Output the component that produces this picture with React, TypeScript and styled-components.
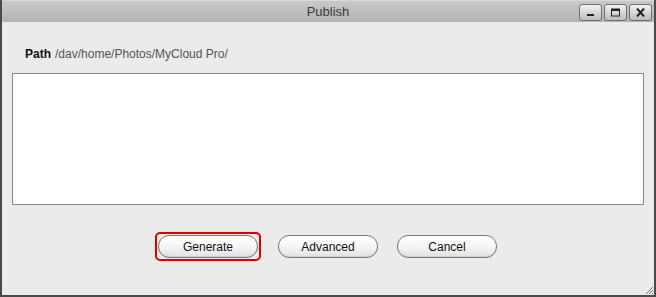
import React from 'react';
import styled, { createGlobalStyle } from 'styled-components';

const GlobalStyle = createGlobalStyle`
  html, body {
    margin: 0;
    padding: 0;
    background: #ebebeb;
  }
  body {
    font-family: 'Liberation Sans', Arial, sans-serif;
  }
`;

const Window = styled.div`
  width: 656px;
  height: 297px;
  box-sizing: border-box;
  display: flex;
  flex-direction: column;
  background: #ebebeb;
  border-left: 2px solid #4a4a4a;
  border-right: 2px solid #4a4a4a;
  border-bottom: 2px solid #4a4a4a;
  position: relative;
`;

const TitleBar = styled.div`
  height: 22px;
  flex-shrink: 0;
  display: flex;
  align-items: center;
  justify-content: center;
  position: relative;
  background: linear-gradient(#c9c9c9, #b3b3b3);
  border-top: 1px solid #d8d8d8;
  box-sizing: border-box;
`;

const Title = styled.span`
  font-size: 13px;
  color: #3c3c3c;
`;

const WindowControls = styled.div`
  position: absolute;
  right: 2px;
  top: 3px;
  display: flex;
  gap: 2px;
`;

const ControlButton = styled.div`
  width: 23px;
  height: 17px;
  box-sizing: border-box;
  border: 1px solid #6f6f6f;
  border-radius: 3px;
  background: linear-gradient(#f2f2f2, #bdbdbd);
  display: flex;
  align-items: center;
  justify-content: center;
`;

const Body = styled.div`
  flex: 1;
  display: flex;
  flex-direction: column;
  padding: 0 10px;
`;

const PathRow = styled.div`
  margin-top: 25px;
  padding-left: 13px;
  font-size: 12px;
  height: 15px;
  line-height: 15px;
`;

const PathLabel = styled.span`
  font-weight: bold;
  color: #111;
  margin-right: 4px;
`;

const PathValue = styled.span`
  color: #555;
`;

const TextArea = styled.div`
  margin-top: 11px;
  height: 132px;
  background: #fff;
  border: 1px solid #8a8a8a;
  box-sizing: border-box;
`;

const ButtonRow = styled.div`
  margin-top: 30px;
  display: flex;
  justify-content: center;
  gap: 19px;
  padding-right: 2px;
`;

const Focus = styled.div`
  border: 2px solid #dd0000;
  border-radius: 5px;
  padding: 1px;
  margin: -3px -2px;
  display: flex;
`;

const Button = styled.button`
  width: 100px;
  height: 23px;
  box-sizing: border-box;
  border: 1px solid #7a7a7a;
  border-radius: 11px;
  background: linear-gradient(#ffffff 0%, #f6f6f6 50%, #e2e2e2 100%);
  box-shadow: inset 0 -1px 1px #cfcfcf;
  font-family: 'Liberation Sans', Arial, sans-serif;
  font-size: 12px;
  color: #111;
  padding: 0;
`;

const Grip = styled.svg`
  position: absolute;
  right: 0;
  bottom: 0;
`;

export default function App() {
  return (
    <>
      <GlobalStyle />
      <Window>
        <TitleBar>
          <Title>Publish</Title>
          <WindowControls>
            <ControlButton>
              <svg width="11" height="9" viewBox="0 0 11 9">
                <rect x="2" y="6" width="7" height="2" fill="#222" />
              </svg>
            </ControlButton>
            <ControlButton>
              <svg width="11" height="9" viewBox="0 0 11 9">
                <rect x="1.5" y="1" width="8" height="7" fill="none" stroke="#222" strokeWidth="1" />
                <rect x="1.5" y="1" width="8" height="2" fill="#222" />
              </svg>
            </ControlButton>
            <ControlButton>
              <svg width="11" height="9" viewBox="0 0 11 9">
                <path d="M2 0.5 L9 8.5 M9 0.5 L2 8.5" stroke="#222" strokeWidth="2" />
              </svg>
            </ControlButton>
          </WindowControls>
        </TitleBar>
        <Body>
          <PathRow>
            <PathLabel>Path</PathLabel>
            <PathValue>/dav/home/Photos/MyCloud Pro/</PathValue>
          </PathRow>
          <TextArea />
          <ButtonRow>
            <Focus>
              <Button>Generate</Button>
            </Focus>
            <Button>Advanced</Button>
            <Button>Cancel</Button>
          </ButtonRow>
        </Body>
        <Grip width="10" height="10" viewBox="0 0 10 10">
          <path d="M9 2 L2 9 M9 5 L5 9 M9 8 L8 9" stroke="#777" strokeWidth="1" />
        </Grip>
      </Window>
    </>
  );
}
